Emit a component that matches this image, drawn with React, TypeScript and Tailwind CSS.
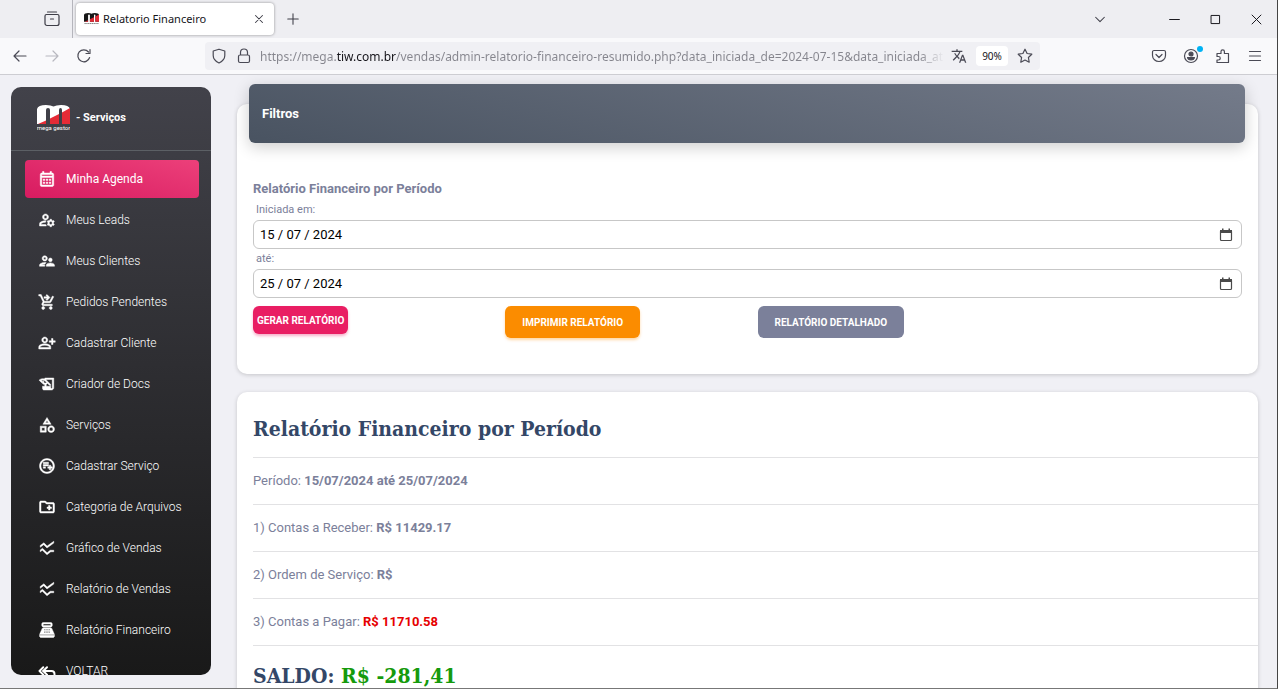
import type { ReactNode } from 'react';
import { ReplyAll } from 'lucide-react';
import {
  MdOutlineCalendarMonth,
  MdOutlineCategory,
  MdOutlineCreateNewFolder,
  MdOutlineHistoryEdu,
  MdOutlineManageAccounts,
  MdOutlinePersonAddAlt,
  MdOutlinePlaylistAddCircle,
  MdOutlineShoppingCartCheckout,
  MdOutlineSupervisorAccount,
  MdPointOfSale,
  MdSsidChart,
  MdTranslate,
} from 'react-icons/md';

const menu = [
  { label: 'Minha Agenda', icon: MdOutlineCalendarMonth, active: true },
  { label: 'Meus Leads', icon: MdOutlineManageAccounts },
  { label: 'Meus Clientes', icon: MdOutlineSupervisorAccount },
  { label: 'Pedidos Pendentes', icon: MdOutlineShoppingCartCheckout },
  { label: 'Cadastrar Cliente', icon: MdOutlinePersonAddAlt },
  { label: 'Criador de Docs', icon: MdOutlineHistoryEdu },
  { label: 'Serviços', icon: MdOutlineCategory },
  { label: 'Cadastrar Serviço', icon: MdOutlinePlaylistAddCircle },
  { label: 'Categoria de Arquivos', icon: MdOutlineCreateNewFolder },
  { label: 'Gráfico de Vendas', icon: MdSsidChart },
  { label: 'Relatório de Vendas', icon: MdSsidChart },
  { label: 'Relatório Financeiro', icon: MdPointOfSale },
];

function Line({ children, size = 16, className = '' }: { children: ReactNode; size?: number; className?: string }) {
  return (
    <svg
      width={size}
      height={size}
      viewBox="0 0 16 16"
      fill="none"
      stroke="currentColor"
      strokeWidth="1.2"
      strokeLinecap="round"
      strokeLinejoin="round"
      className={className}
      aria-hidden="true"
    >
      {children}
    </svg>
  );
}

function LogoMark({ top, bottom }: { top: string; bottom: string }) {
  return (
    <>
      <path fill={top} d="M0 4Q1 0 9 0Q14 0 16.500 1.500Q19 0 24 0Q32 0 33 4V19H25V5Q25 3 23.500 3Q22 3 22 5V19H13V5Q13 3 11 3Q9 3 9 5V19H0Z" />
      <path fill={bottom} d="M33 3V19H25V7.500ZM22 9V19H13V13.500ZM9 15.500V19H1Z" />
    </>
  );
}

function TabBar() {
  return (
    <div className="flex h-[38px] items-center bg-[#eeeef2] text-[#3d3d47]">
      <div className="flex h-full w-[73px] shrink-0 items-center justify-end border-r border-[#b5b5bc] pr-3">
        <button aria-label="Abas recentes">
          <Line>
            <path d="M3.500 1h9M2.500 3.500h11a1.500 1.500 0 0 1 1.500 1.500v7.500a2 2 0 0 1-2 2H3a2 2 0 0 1-2-2V5a1.500 1.500 0 0 1 1.500-1.500ZM6.500 8h3" />
          </Line>
        </button>
      </div>
      <div className="ml-[3px] flex h-8 w-[198px] items-center rounded bg-white px-2 shadow-[0_0_3px_rgba(0,0,0,0.4)]">
        <svg width="15" height="12" viewBox="0 0 33 26" aria-hidden="true">
          <LogoMark top="#171717" bottom="#e52b36" />
          <path stroke="#777" strokeWidth="2" strokeDasharray="3 1" d="M1 23h31" />
        </svg>
        <span className="ml-1 flex-1 font-['Noto_Sans',sans-serif] text-[11px] text-[#15141a]">Relatorio Financeiro</span>
        <button aria-label="Fechar aba">
          <Line size={14}>
            <path d="m4 4 8 8M12 4l-8 8" />
          </Line>
        </button>
      </div>
      <button aria-label="Nova aba" className="ml-3">
        <Line size={14}>
          <path d="M8 2v12M2 8h12" />
        </Line>
      </button>
      <div className="ml-auto flex items-center pr-[14px]">
        <button aria-label="Listar abas" className="mr-[61px]">
          <Line size={14}>
            <path d="m3 6 5 5 5-5" />
          </Line>
        </button>
        <div className="flex items-center gap-7 text-[#15141a]">
          <button aria-label="Minimizar">
            <Line size={13}>
              <path d="M2 8h12" />
            </Line>
          </button>
          <button aria-label="Maximizar">
            <Line size={13}>
              <path d="M3 3h10v10H3z" strokeLinejoin="miter" />
            </Line>
          </button>
          <button aria-label="Fechar">
            <Line size={13}>
              <path d="m2.500 2.500 11 11M13.500 2.500l-11 11" />
            </Line>
          </button>
        </div>
      </div>
    </div>
  );
}

function Toolbar() {
  return (
    <div className="flex h-[37px] items-center border-b border-[#cdcdd2] bg-[#f9f9fb] pl-3 text-[#4a4a55]">
      <div className="flex w-[193px] shrink-0 items-center gap-4">
        <button aria-label="Voltar">
          <Line>
            <path d="M14 8H2M7 3 2 8l5 5" />
          </Line>
        </button>
        <button aria-label="Avançar" className="text-[#b8b8bf]">
          <Line>
            <path d="M2 8h12M9 3l5 5-5 5" />
          </Line>
        </button>
        <button aria-label="Recarregar">
          <Line>
            <path d="M13.600 9.500A6 6 0 1 1 12.500 4M14 1.500V5.500H10" />
          </Line>
        </button>
      </div>
      <div className="flex h-7 w-[835px] min-w-0 items-center rounded bg-[#f0f0f4] pl-[6px] pr-[7px]">
        <Line className="shrink-0">
          <path d="M8 1.200 13.800 3V7.500C13.800 11 11 13.500 8 15 5 13.500 2.200 11 2.200 7.500V3Z" />
        </Line>
        <Line className="ml-[9px] shrink-0">
          <path d="M4 7h8a1.500 1.500 0 0 1 1.500 1.500v4.500a1.500 1.500 0 0 1-1.500 1.500H4A1.500 1.500 0 0 1 2.500 13V8.500A1.500 1.500 0 0 1 4 7ZM4.500 7V4.500a3.500 3.500 0 0 1 7 0V7" />
        </Line>
        {/* the domain part is darker than the rest of the address */}
        <input
          aria-label="Endereço"
          readOnly
          value="https://mega.tiw.com.br/vendas/admin-relatorio-financeiro-resumido.php?data_iniciada_de=2024-07-15&data_iniciada_ate=2024-07-25"
          className="ml-2 h-6 min-w-0 flex-1 bg-[linear-gradient(90deg,#85858d_76px,#15141a_76px,#15141a_136px,#85858d_136px,#85858d_660px,transparent_684px)] bg-clip-text pt-px font-['Noto_Sans',sans-serif] text-[12px] text-transparent outline-none"
        />
        <button aria-label="Traduzir página" className="ml-[3px]">
          <MdTranslate size={16} />
        </button>
        <button className="ml-[9px] h-5 w-8 rounded-sm bg-white font-['Noto_Sans',sans-serif] text-[10px] text-[#15141a]">90%</button>
        <button aria-label="Favoritar" className="ml-[9px]">
          <Line>
            <path d="m8 1.200 2.100 4.300 4.700.7-3.400 3.300.8 4.700L8 12l-4.200 2.200.8-4.700L1.200 6.200l4.700-.7Z" />
          </Line>
        </button>
      </div>
      <div className="ml-auto flex items-center gap-4 pr-[14px]">
        <button aria-label="Pocket">
          <Line>
            <path d="M3 2.500h10A1.500 1.500 0 0 1 14.500 4v3.500a6.500 6 0 0 1-13 0V4A1.500 1.500 0 0 1 3 2.500ZM5 6.500l3 3 3-3" />
          </Line>
        </button>
        <button aria-label="Conta" className="relative">
          <Line>
            <circle cx="8" cy="8" r="6.500" />
            <circle cx="8" cy="6" r="2" fill="currentColor" />
            <path d="M4.500 9.500h7Q11 12 8 12T4.500 9.500Z" fill="currentColor" />
          </Line>
          <span className="absolute -right-1 -top-0.5 size-[6px] rounded-full bg-[#00b3f4]" />
        </button>
        <button aria-label="Extensões">
          <Line>
            <path d="M2 7V5.500h4V3.500a1.700 1.700 0 0 1 3.400 0v2H13.500v9H2V12h1.500a1.700 1.700 0 0 0 0-3.500H2Z" />
          </Line>
        </button>
        <button aria-label="Menu">
          <Line>
            <path d="M2.500 3.500h11M2.500 8h11M2.500 12.500h11" />
          </Line>
        </button>
      </div>
    </div>
  );
}

function Sidebar() {
  const item = 'flex h-[38px] shrink-0 items-center gap-[10px] rounded pl-[13px] text-[12px]';
  return (
    <aside className="mb-[13px] ml-[11px] mt-3 w-[200px] shrink-0 overflow-hidden rounded-[10px] bg-linear-to-b from-[#42424a] to-[#191919] text-white">
      <a href="#" className="flex h-16 items-center border-b border-[#5c6065] pl-[26px] text-[11px] font-bold">
        <svg width="33" height="27" viewBox="0 0 33 27" aria-hidden="true">
          <LogoMark top="#fff" bottom="#e52b36" />
          <text x="16.500" y="25" textAnchor="middle" fill="#fff" fontSize="6" fontFamily="Roboto, sans-serif" fontWeight="400">
            mega gestor
          </text>
        </svg>
        <span className="ml-[6px]">- Serviços</span>
      </a>
      <nav className="flex flex-col gap-[3px] pl-[14px] pr-3 pt-[9px]">
        {menu.map(({ label, icon: Icon, active }) => (
          <a key={label} href="#" className={`${item} ${active ? 'bg-linear-[195deg] from-[#ec407a] to-[#d81b60]' : 'font-light'}`}>
            {/* thin outline makes the glyphs bolder; the empty bounding path stays unpainted */}
            <Icon size={18} strokeWidth={0.6} className="[&_[fill=none]]:stroke-none" />
            {label}
          </a>
        ))}
        <a href="#" className={`${item} font-light`}>
          <ReplyAll size={18} strokeWidth={2.6} />
          VOLTAR
        </a>
      </nav>
    </aside>
  );
}

function DateField({ id, label, value }: { id: string; label: string; value: string }) {
  return (
    <div>
      <label htmlFor={id} className="block pl-[3px] text-[11px] leading-5">
        {label}
      </label>
      <div className="flex h-[29px] items-center rounded-md border border-[#c7c7c7] px-[6px]">
        <input id={id} defaultValue={value} className="min-w-0 flex-1 text-[13px] text-black outline-none" />
        <button type="button" aria-label="Abrir calendário" className="mr-[2px] text-[#4a4a4a]">
          <svg width="14" height="14" viewBox="0 0 14 14" fill="none" aria-hidden="true">
            <path d="M2.500 2.500h9a1 1 0 0 1 1 1v8a1 1 0 0 1-1 1h-9a1 1 0 0 1-1-1v-8a1 1 0 0 1 1-1Z" stroke="currentColor" strokeWidth="1.200" />
            <path d="M1 2h2V.500h1.500V2h5V.500H11V2h2v3H1Z" fill="currentColor" />
          </svg>
        </button>
      </div>
    </div>
  );
}

function Filters() {
  return (
    <section className="mt-[29px] rounded-[10px] bg-white px-3 pb-9 shadow-[0_1px_4px_rgba(0,0,0,0.18)]">
      <div className="relative -top-5 mr-px flex h-[59px] items-center rounded-md bg-linear-[195deg] from-[#747b8a] to-[#495361] px-[13px] text-[13px] font-bold text-white shadow-[0_4px_16px_rgba(0,0,0,0.2)]">
        Filtros
      </div>
      <form className="px-1 pt-4">
        <h2 className="text-[13px] font-bold leading-5">Relatório Financeiro por Período</h2>
        <div className="pt-px">
          <DateField id="de" label="Iniciada em:" value="15 / 07 / 2024" />
          <DateField id="ate" label="até:" value="25 / 07 / 2024" />
        </div>
        <div className="mt-2 grid grid-cols-4 items-start justify-items-start gap-5 text-[10px] font-bold text-white">
          <button type="button" className="h-7 rounded-md bg-[#e91e63] px-1 shadow-[0_2px_3px_rgba(233,30,99,0.35)]">
            GERAR RELATÓRIO
          </button>
          <button type="button" className="h-8 rounded-md bg-[#fb8c00] px-[17px] shadow-[0_2px_3px_rgba(251,140,0,0.35)]">
            IMPRIMIR RELATÓRIO
          </button>
          <button type="button" className="h-8 rounded-md bg-[#7b809a] px-[17px]">
            RELATÓRIO DETALHADO
          </button>
        </div>
      </form>
    </section>
  );
}

function Report() {
  const row = 'flex h-[47px] items-center border-b border-[#e2e2e4] text-[13px]';
  const title = "flex items-center font-['DejaVu_Serif_Condensed','DejaVu_Serif',serif] text-[21px] font-bold text-[#344767]";
  return (
    <section className="mt-[18px] rounded-[10px] bg-white pb-10 pl-4 shadow-[0_1px_4px_rgba(0,0,0,0.18)]">
      <h1 className={`${title} h-[66px] border-b border-[#e2e2e4] pt-2`}>Relatório Financeiro por Período</h1>
      <p className={row}>
        Período:&nbsp;<b>15/07/2024 até 25/07/2024</b>
      </p>
      <p className={row}>
        1) Contas a Receber:&nbsp;<b>R$ 11429.17</b>
      </p>
      <p className={row}>
        2) Ordem de Serviço:&nbsp;<b>R$</b>
      </p>
      <p className={row}>
        3) Contas a Pagar:&nbsp;<b className="text-[#e60000]">R$ 11710.58</b>
      </p>
      <h2 className={`${title} h-[60px]`}>
        SALDO:&nbsp;<span className="text-[#159a0c]">R$ -281,41</span>
      </h2>
    </section>
  );
}

export default function App() {
  return (
    <div className="flex h-screen flex-col overflow-hidden border-b border-r border-b-[#777] border-r-[#444] bg-[#f0f0f5] font-[Roboto,sans-serif] text-[#7b809a]">
      <header className="shrink-0">
        <TabBar />
        <Toolbar />
      </header>
      <div className="flex min-h-0 flex-1">
        <Sidebar />
        <main className="min-w-0 flex-1 overflow-hidden pl-[26px] pr-[19px]">
          <Filters />
          <Report />
        </main>
      </div>
    </div>
  );
}
